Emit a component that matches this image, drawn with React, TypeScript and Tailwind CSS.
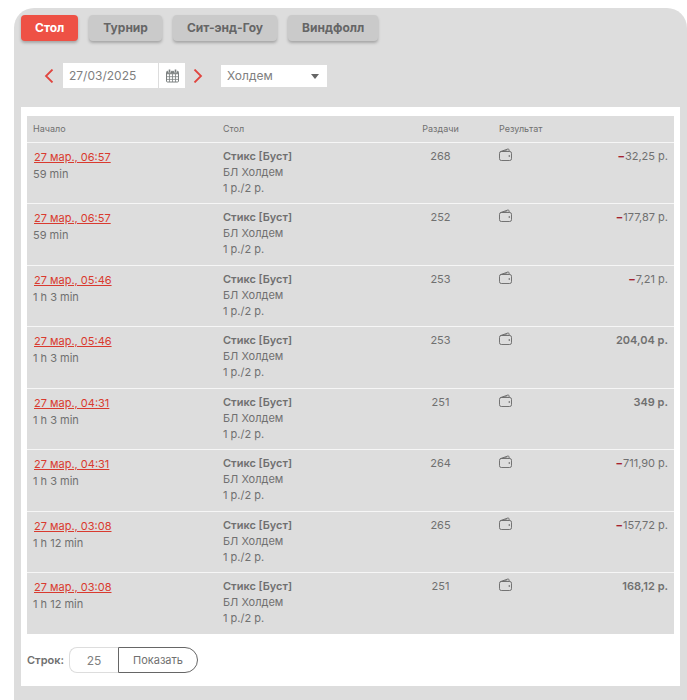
import { useState } from "react"
import clsx from "clsx"

const tabs = ["Стол", "Турнир", "Сит-энд-Гоу", "Виндфолл"]

const games = ["Холдем", "Омаха"]

const sessions = [
  { start: "27 мар., 06:57", duration: "59 min", hands: 268, result: "32,25 р.", loss: true },
  { start: "27 мар., 06:57", duration: "59 min", hands: 252, result: "177,87 р.", loss: true },
  { start: "27 мар., 05:46", duration: "1 h 3 min", hands: 253, result: "7,21 р.", loss: true },
  { start: "27 мар., 05:46", duration: "1 h 3 min", hands: 253, result: "204,04 р.", loss: false },
  { start: "27 мар., 04:31", duration: "1 h 3 min", hands: 251, result: "349 р.", loss: false },
  { start: "27 мар., 04:31", duration: "1 h 3 min", hands: 264, result: "711,90 р.", loss: true },
  { start: "27 мар., 03:08", duration: "1 h 12 min", hands: 265, result: "157,72 р.", loss: true },
  { start: "27 мар., 03:08", duration: "1 h 12 min", hands: 251, result: "168,12 р.", loss: false },
]

function Chevron({ flip = false }: { flip?: boolean }) {
  return (
    <svg viewBox="0 0 10 14" className="w-[10px] h-[14px]" fill="none" stroke="#e0453f" strokeWidth="1.8">
      <path d={flip ? "M1.5 .5 8 7l-6.5 6.5" : "M8.5 .5 2 7l6.5 6.5"} />
    </svg>
  )
}

function CalendarIcon() {
  return (
    <svg viewBox="0 0 13 14" className="w-[13px] h-[14px]" fill="none" stroke="#7b8080">
      <path d="M.5 4v8a1 1 0 0 0 1 1h10a1 1 0 0 0 1-1V4" />
      <path d="M.5 4.800V3.300a1 1 0 0 1 1-1h10a1 1 0 0 1 1 1v1.500z" fill="#7b8080" strokeWidth=".8" />
      <path d="M3.500 5v8M6.500 5v8M9.500 5v8M.5 7.700h12M.5 10.400h12" strokeWidth=".8" />
      <path d="M3.500 .5v3M9.500 .5v3" stroke="#fff" strokeWidth="2.600" />
      <path d="M3.500 .5v3M9.500 .5v3" strokeWidth="1.600" />
    </svg>
  )
}

function WalletIcon() {
  return (
    <svg viewBox="0 0 13 13" className="w-[13px] h-[13px]" fill="none" stroke="#666" strokeWidth=".9">
      <rect x=".5" y="3.500" width="12" height="9" rx="1.800" />
      <path d="M1.300 3.700 8.800 1a.8.8 0 0 1 1.100.6l.4 1.900" />
      <path d="M3.200 3.400 8.500 2" strokeWidth=".6" />
      <circle cx="10.300" cy="8" r=".8" fill="#555" stroke="none" />
    </svg>
  )
}

export default function App() {
  const [tab, setTab] = useState("Стол")
  const [date, setDate] = useState("27/03/2025")
  const [rows, setRows] = useState("25")

  return (
    <div className="min-h-screen bg-white pt-2 pl-[14px] flex flex-col font-['Inter',sans-serif] text-[#707070]">
      <main className="flex-1 bg-[#ddd] rounded-t-[20px] px-[7px] pt-[7px] pb-[14px]">
        <nav className="flex gap-[11px]">
          {tabs.map((name) => (
            <button
              key={name}
              type="button"
              onClick={() => setTab(name)}
              className={clsx(
                "h-[26px] px-[14px] rounded text-[12px] font-bold shadow-[0_2px_3px_rgba(0,0,0,0.25)]",
                tab === name ? "bg-[#ee5145] text-white" : "bg-[#cacaca] text-[#666]"
              )}
            >
              {name}
            </button>
          ))}
        </nav>

        {/* Filters */}
        <div className="flex items-center mt-[22px] pl-[23px]">
          <button type="button" aria-label="Предыдущий день">
            <Chevron />
          </button>
          <input
            type="text"
            aria-label="Дата"
            value={date}
            onChange={(e) => setDate(e.target.value)}
            className="ml-[9px] w-[95px] h-[25px] px-[6px] bg-white text-[12px] text-[#808080]"
          />
          <button
            type="button"
            aria-label="Календарь"
            className="ml-px w-[26px] h-[25px] bg-white flex items-center justify-center"
          >
            <CalendarIcon />
          </button>
          <button type="button" aria-label="Следующий день" className="ml-2">
            <Chevron flip />
          </button>
          <div className="relative ml-[18px]">
            <select
              aria-label="Игра"
              className="block appearance-none w-[106px] h-[22px] pl-[6px] pr-6 bg-white text-[12px] text-[#808080]"
            >
              {games.map((game) => (
                <option key={game}>{game}</option>
              ))}
            </select>
            <svg viewBox="0 0 8 5" className="absolute right-2 top-[9px] w-2 h-[5px] pointer-events-none" fill="#666">
              <path d="M0 0h8L4 5z" />
            </svg>
          </div>
        </div>

        <section className="mt-[19px] bg-white px-[6px] pt-[9px] pb-[13px]">
          <table className="w-full table-fixed border-separate border-spacing-0 bg-[#ddd] text-[11px] leading-4">
            <thead>
              <tr className="h-[26px] text-[9px] text-left">
                <th className="w-[190px] px-[6px] font-normal">Начало</th>
                <th className="w-[171px] px-[6px] font-normal">Стол</th>
                <th className="w-[105px] px-[6px] font-normal text-center">Раздачи</th>
                <th className="px-[6px] font-normal" colSpan={2}>Результат</th>
              </tr>
            </thead>
            <tbody>
              {sessions.map((session, index) => (
                <tr
                  key={index}
                  className="h-[61px] even:h-[62px] align-top *:border-t *:border-[#f6f6f6] *:px-[6px] *:pt-[5px]"
                >
                  <td>
                    <a href="#" className="block w-fit p-px text-[#d93a2f] underline">
                      {session.start}
                    </a>
                    {session.duration}
                  </td>
                  <td>
                    <div className="font-semibold">Стикс [Буст]</div>
                    <div>БЛ Холдем</div>
                    <div>1 р./2 р.</div>
                  </td>
                  <td className="text-center">{session.hands}</td>
                  <td>
                    <WalletIcon />
                  </td>
                  <td className={clsx("text-right", !session.loss && "font-semibold")}>
                    {session.loss && <span className="font-bold text-[#a5222e]">−</span>}
                    {session.result}
                  </td>
                </tr>
              ))}
            </tbody>
          </table>

          <form className="flex items-center mt-[13px]" onSubmit={(e) => e.preventDefault()}>
            <label htmlFor="rows" className="text-[11px] font-semibold">
              Строк:
            </label>
            <input
              id="rows"
              type="text"
              value={rows}
              onChange={(e) => setRows(e.target.value)}
              className="ml-[5px] w-[49px] h-[26px] border border-r-0 border-[#ddd] rounded-l-lg text-[12px] text-center text-[#808080]"
            />
            <button type="submit" className="h-[26px] px-[14px] border border-[#666] rounded-r-full text-[11px]">
              Показать
            </button>
          </form>
        </section>
      </main>
    </div>
  )
}
